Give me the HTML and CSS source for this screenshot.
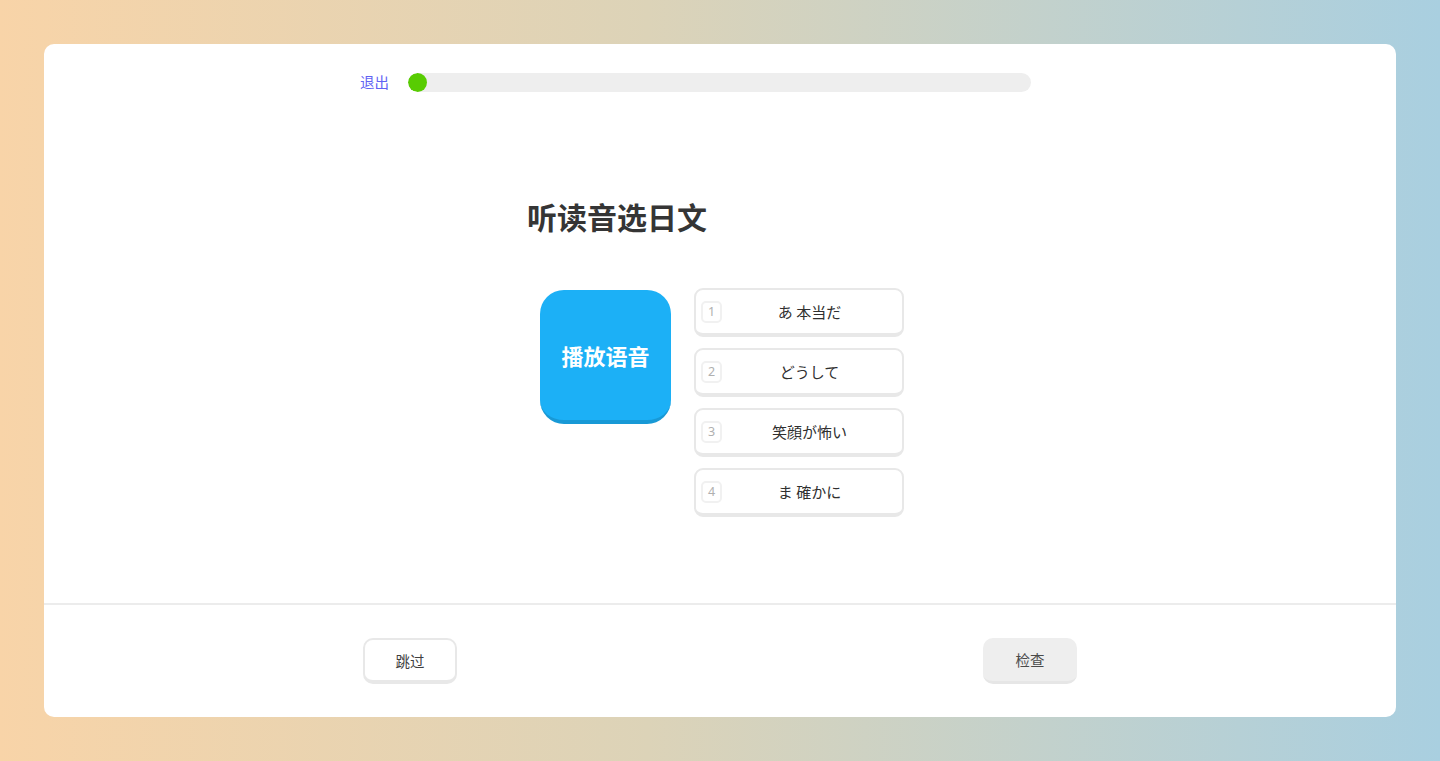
FILE: index.html
```html
<!DOCTYPE html>
<html lang="zh">
<head>
<meta charset="utf-8">
<title>听读音选日文</title>
<link rel="stylesheet" href="styles.css">
</head>
<body>
<div class="card">
  <header class="top">
    <a class="exit">退出</a>
    <div class="track"><div class="fill"></div></div>
  </header>
  <main class="main">
    <div class="content">
      <h1 class="title">听读音选日文</h1>
      <div class="row">
        <button class="play">播放语音</button>
        <ul class="options">
          <li class="opt"><span class="num">1</span><span class="txt" lang="ja">あ 本当だ</span></li>
          <li class="opt"><span class="num">2</span><span class="txt" lang="ja">どうして</span></li>
          <li class="opt"><span class="num">3</span><span class="txt" lang="ja">笑顔が怖い</span></li>
          <li class="opt"><span class="num">4</span><span class="txt" lang="ja">ま 確かに</span></li>
        </ul>
      </div>
    </div>
  </main>
  <footer class="foot">
    <div class="foot-inner">
      <button class="btn skip">跳过</button>
      <button class="btn check">检查</button>
    </div>
  </footer>
</div>
</body>
</html>
```

FILE: styles.css
```css
* { box-sizing: border-box; }
html, body { margin: 0; height: 100%; }
body {
  padding: 44px;
  background: linear-gradient(90deg, #f8d4a8 0%, #dcd3b8 45%, #a9cfe0 100%);
  font-family: "Noto Sans", "Noto Sans CJK SC", sans-serif;
  color: #333;
}
.card {
  height: 673px;
  background: #fff;
  border-radius: 10px;
  display: flex;
  flex-direction: column;
}
.top {
  width: 720px;
  margin: 29px auto 0;
  display: flex;
  align-items: center;
  gap: 19px;
  height: 19px;
  padding-right: 49px;
}
.exit {
  font-family: "Noto Sans CJK SC", sans-serif;
  font-size: 14.5px;
  line-height: 19px;
  margin-top: -3px;
  color: #6262f4;
  cursor: pointer;
}
.track {
  flex: 1;
  height: 19px;
  background: #eeeeee;
  border-radius: 10px;
  overflow: hidden;
}
.fill {
  width: 19px;
  height: 19px;
  background: #58cc02;
  border-radius: 50%;
}
.main { flex: 1; }
.content {
  width: 386px;
  margin: 0 auto;
  padding-top: 104px;
}
.title {
  margin: 0;
  font-family: "Noto Sans CJK SC", sans-serif;
  font-size: 30px;
  font-weight: 700;
  line-height: 40px;
  color: #353535;
}
.row {
  margin-top: 52px;
  display: flex;
  justify-content: center;
  align-items: flex-start;
  gap: 23px;
  padding-left: 4px;
}
.play {
  margin-top: 2px;
  width: 131px;
  height: 134px;
  border: none;
  border-bottom: 4px solid #1899d6;
  border-radius: 24px;
  background: #1cb0f6;
  color: #fff;
  font-family: "Noto Sans CJK SC", sans-serif;
  font-size: 22px;
  font-weight: 700;
  padding: 0;
}
.options {
  list-style: none;
  margin: 0;
  padding: 0;
  display: flex;
  flex-direction: column;
  gap: 11px;
  width: 210px;
}
.opt {
  height: 49px;
  border: 2px solid #e8e8e8;
  border-bottom-width: 4px;
  border-radius: 9px;
  display: flex;
  align-items: center;
  padding: 0 5px;
}
.num {
  width: 21px;
  height: 22px;
  border: 2px solid #f1f1f1;
  border-radius: 5px;
  display: flex;
  align-items: center;
  justify-content: center;
  font-size: 12.5px;
  color: #b0b0b0;
}
.txt {
  flex: 1;
  text-align: center;
  font-family: "Noto Sans CJK JP", sans-serif;
  font-size: 15px;
  color: #2f2f2f;
}
.foot {
  border-top: 2px solid #ececec;
  height: 114px;
}
.foot-inner {
  width: 714px;
  margin: 33px auto 0;
  display: flex;
  justify-content: space-between;
}
.btn {
  width: 94px;
  height: 46px;
  border-radius: 10px;
  font-family: "Noto Sans CJK SC", sans-serif;
  font-size: 14.5px;
  color: #3f3f3f;
  padding: 0;
}
.skip {
  background: #fff;
  border: 2px solid #e8e8e8;
  border-bottom-width: 4px;
}
.check {
  background: #eeeeee;
  border: none;
  border-bottom: 3px solid #e6e6e6;
  color: #4a4a4a;
}
```
